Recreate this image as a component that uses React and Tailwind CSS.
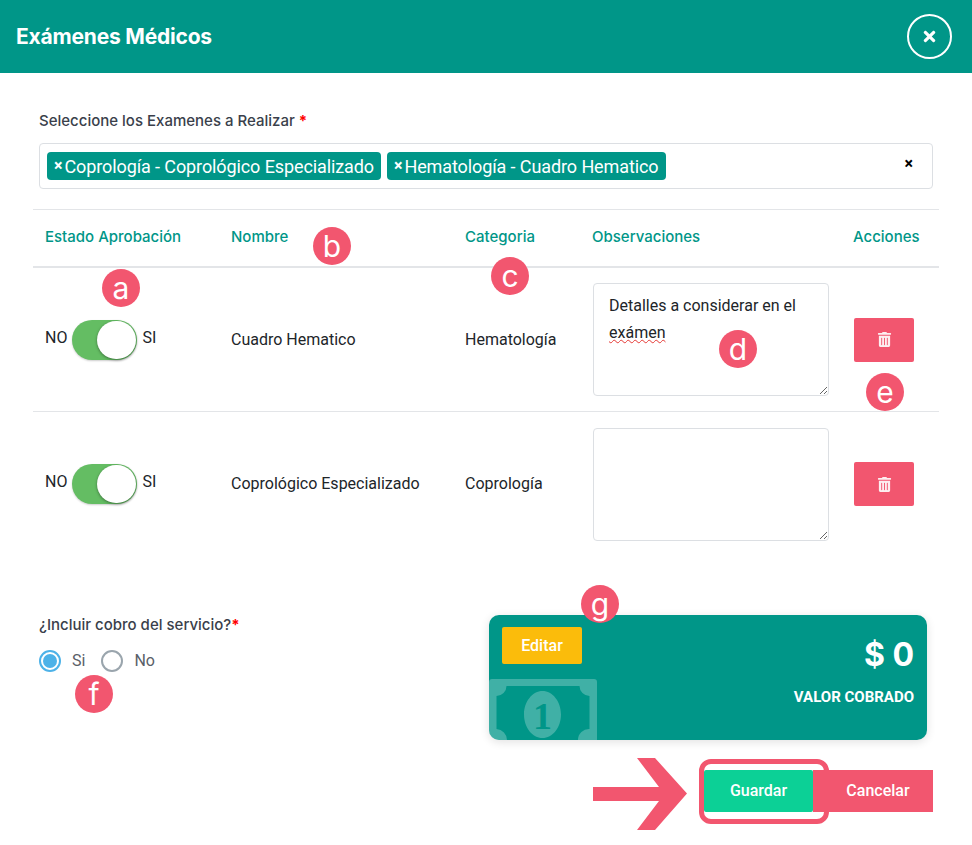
import React from 'react';
import { FaTimes, FaTrashAlt } from 'react-icons/fa';

const headingFont = "font-['Inter','Liberation_Sans',sans-serif]";

const Badge = ({ letter, className }) => (
  <div className={`absolute w-[38px] h-[38px] rounded-full bg-[#f2566f] text-white flex items-center justify-center text-[30px] leading-none font-['Inter',sans-serif] ${className}`}>
    {letter}
  </div>
);

const Chip = ({ label }) => (
  <span className="h-[28px] flex items-center gap-[2px] px-[7px] rounded-[4px] bg-[#009688] text-white text-[18px] tracking-[-0.1px] whitespace-nowrap">
    <span className="font-bold text-[16px] leading-none">×</span>
    {label}
  </span>
);

const Toggle = () => (
  <div className="flex items-center gap-[5px] text-[16px] text-[#212529]">
    <span className="mb-1">NO</span>
    <div className="w-[65px] h-[40px] rounded-full bg-[#64bd63] flex justify-end items-center pr-[1px] shadow-[0_1px_2px_rgba(0,0,0,0.2)]">
      <div className="w-[39px] h-[38px] rounded-full bg-white shadow-[0_1px_3px_rgba(0,0,0,0.4)]"></div>
    </div>
    <span className="mb-1">SI</span>
  </div>
);

const TrashButton = () => (
  <button className="w-[60px] h-[44px] ml-[1px] rounded-[2px] bg-[#f2566f] text-white flex items-center justify-center">
    <FaTrashAlt size={15} className="opacity-90" />
  </button>
);

const Row = ({ name, category, children, last }) => (
  <div className={`grid grid-cols-[186px_234px_127px_261px_104px] items-center h-[144px] ${last ? '' : 'border-b border-[#e3e5e8]'}`}>
    <div className="pl-[12px]"><Toggle /></div>
    <div className="pl-[12px] text-[16px] text-[#212529]">{name}</div>
    <div className="pl-[12px] text-[16px] text-[#212529]">{category}</div>
    <div className="pl-[13px]">{children}</div>
    <div className="pl-[12px]"><TrashButton /></div>
  </div>
);

const BillIcon = () => (
  <svg className="absolute left-0 bottom-0" width="108" height="61" viewBox="0 0 108 61">
    <path
      fill="#ffffff"
      fillOpacity="0.25"
      fillRule="evenodd"
      d="M3 0H105A3 3 0 0 1 108 3V61H0V3A3 3 0 0 1 3 0Z M7.5 17A10 10 0 0 0 17.5 7H90.5A10 10 0 0 0 100.5 17V50A11 11 0 0 0 89 61H18A11 11 0 0 0 7.5 50Z M53.5 12C43.5 12 35 22.5 35 35.5S43.5 59 53.5 59 72 48.5 72 35.5 63.5 12 53.5 12Z"
    />
    <text x="53.5" y="50" textAnchor="middle" fontSize="38" fontWeight="700" fontFamily="Liberation Serif, serif" fill="#009688">1</text>
  </svg>
);

const Radio = ({ label, checked }) => (
  <label className="flex items-center gap-[11px] text-[16px] text-[#5a6068]">
    {checked ? (
      <span className="w-[22px] h-[22px] rounded-full border-2 border-[#4db2e8] flex items-center justify-center">
        <span className="w-[14px] h-[14px] rounded-full bg-[#4db2e8]"></span>
      </span>
    ) : (
      <span className="w-[22px] h-[22px] rounded-full border-2 border-[#9aa5ad]"></span>
    )}
    {label}
  </label>
);

export default function App() {
  return (
    <div className="relative w-[972px] h-[845px] bg-white overflow-hidden font-['Roboto',sans-serif]">
      {/* Header */}
      <header className="h-[73px] bg-[#009688] flex items-center justify-between pl-[16px] pr-[20px]">
        <h1 className={`text-white text-[21px] font-bold tracking-[-0.2px] ${headingFont}`}>Exámenes Médicos</h1>
        <button className="w-[45px] h-[45px] rounded-full border-2 border-white text-white flex items-center justify-center">
          <FaTimes size={17} />
        </button>
      </header>

      <main className="px-[33px]">
        {/* Exam select */}
        <div className="px-[6px] pt-[38px]">
          <label className={`block h-[20px] text-[15px] leading-[20px] font-medium text-[#3a3f4b] ${headingFont}`}>
            Seleccione los Examenes a Realizar <span className="text-[#f00] font-bold">*</span>
          </label>
          <div className="mt-[12px] h-[46px] rounded-[4px] border border-[#dcdfe3] flex items-center gap-[6px] pl-[7px] pr-[19px]">
            <Chip label="Coprología - Coprológico Especializado" />
            <Chip label="Hematología - Cuadro Hematico" />
            <span className="ml-auto mb-1 font-bold text-[16px] leading-none text-black">×</span>
          </div>
        </div>

        {/* Table */}
        <div className="mt-[20px] border-t border-[#e3e5e8]">
          <div className={`grid grid-cols-[186px_234px_127px_261px_104px] items-center h-[58px] pb-[1px] border-b-2 border-[#e3e5e8] text-[#009688] text-[15px] font-medium ${headingFont}`}>
            <div className="pl-[12px]">Estado Aprobación</div>
            <div className="pl-[12px]">Nombre</div>
            <div className="pl-[12px]">Categoria</div>
            <div className="pl-[12px]">Observaciones</div>
            <div className="pl-[12px]">Acciones</div>
          </div>
          <Row name="Cuadro Hematico" category="Hematología">
            <div className="w-[236px] h-[113px] overflow-auto resize rounded-[4px] border border-[#dcdfe3] px-[15px] py-[8px] text-[16px] leading-[27px] text-[#212529]">
              Detalles a considerar en el <span className="underline decoration-wavy decoration-[#e53935] decoration-1">exámen</span>
            </div>
          </Row>
          <Row name="Coprológico Especializado" category="Coprología" last>
            <textarea className="block w-[236px] h-[113px] rounded-[4px] border border-[#dcdfe3] px-[15px] py-[8px] text-[16px]"></textarea>
          </Row>
        </div>

        {/* Charge */}
        <div className="mt-[59px] flex justify-between pr-[12px]">
          <div className="pl-[6px]">
            <div className={`text-[15px] leading-[20px] font-medium text-[#3a3f4b] ${headingFont}`}>
              ¿Incluir cobro del servicio?<span className="text-[#f00] font-bold">*</span>
            </div>
            <div className="mt-[14px] flex gap-[16px]">
              <Radio label="Si" checked />
              <Radio label="No" />
            </div>
          </div>

          <div className="relative w-[438px] h-[125px] rounded-[10px] bg-[#009688] overflow-hidden shadow-[0_2px_10px_rgba(0,0,0,0.12)] p-[13px]">
            <BillIcon />
            <div className="flex justify-between">
              <button className="w-[80px] h-[37px] mt-[-1px] rounded-[2px] bg-[#fbbc0b] text-white text-[16px] font-medium">Editar</button>
              <div className="text-right text-white">
                <div className={`mt-[8px] text-[32px] leading-[38px] font-bold ${headingFont}`}>$ 0</div>
                <div className="mt-[13px] text-[15px] leading-[20px] font-bold">VALOR COBRADO</div>
              </div>
            </div>
          </div>
        </div>

        {/* Actions */}
        <div className="mt-[30px] flex justify-end pr-[6px] text-white text-[16px] font-medium">
          <button className="w-[109px] h-[42px] rounded-[2px] bg-[#0cd096]">Guardar</button>
          <button className="w-[120px] h-[42px] bg-[#f2566f] pl-[10px]">Cancelar</button>
        </div>
      </main>

      {/* Annotations */}
      <div className="absolute left-[699px] top-[759px] w-[130px] h-[65px] rounded-[12px] border-[5px] border-[#f2566f]"></div>
      <svg className="absolute left-[593px] top-[758px]" width="95" height="72" viewBox="0 0 95 72">
        <path fill="#f2566f" d="M0 29H66L44 0H62L94 35.5L62 72H44L66 43H0Z" />
      </svg>
      <Badge letter="a" className="left-[102px] top-[269px]" />
      <Badge letter="b" className="left-[313px] top-[227px]" />
      <Badge letter="c" className="left-[491px] top-[257px]" />
      <Badge letter="d" className="left-[719px] top-[330px]" />
      <Badge letter="e" className="left-[866px] top-[373px]" />
      <Badge letter="f" className="left-[75px] top-[675px]" />
      <Badge letter="g" className="left-[581px] top-[585px]" />
    </div>
  );
}
